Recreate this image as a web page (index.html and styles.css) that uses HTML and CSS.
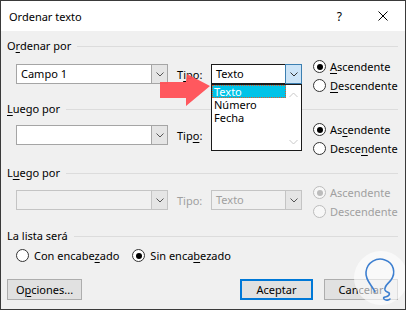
FILE: index.html
```html
<!DOCTYPE html>
<html>
<head>
<meta charset="utf-8">
<link rel="stylesheet" href="styles.css">
</head>
<body>
<div class="dlg">
  <div class="titlebar">
    <span class="title">Ordenar texto</span>
    <span class="help">?</span>
    <svg class="close" width="10" height="10" viewBox="0 0 10 10"><path d="M0.5 0.5L9.5 9.5M9.5 0.5L0.5 9.5" stroke="#000" stroke-width="1" fill="none"/></svg>
  </div>

  <section class="grp g1">
    <div class="hdr"><span>O<u>r</u>denar por</span><i class="line"></i></div>
    <div class="row">
      <div class="combo main"><span class="val">Campo 1</span><span class="btn"><svg width="8" height="5" viewBox="0 0 8 5"><path d="M0.5 0.5L4 4L7.5 0.5" stroke="#555" fill="none"/></svg></span></div>
      <span class="tipo">T<u>i</u>po:</span>
      <div class="combo small focus"><span class="val">Texto</span><span class="btn"><svg width="8" height="5" viewBox="0 0 8 5"><path d="M0.5 0.5L4 4L7.5 0.5" stroke="#333" fill="none"/></svg></span>
        <div class="list">
          <div class="items">
            <div class="item sel">Texto</div>
            <div class="item">Número</div>
            <div class="item">Fecha</div>
          </div>
          <div class="sbar">
            <svg width="9" height="6" viewBox="0 0 9 6"><path d="M0.5 5L4.5 1L8.5 5" stroke="#c8c8c8" fill="none"/></svg>
            <svg width="9" height="6" viewBox="0 0 9 6"><path d="M0.5 1L4.5 5L8.5 1" stroke="#c8c8c8" fill="none"/></svg>
          </div>
        </div>
      </div>
      <div class="radios">
        <label class="radio"><i class="dot on"></i><span><u>A</u>scendente</span></label>
        <label class="radio"><i class="dot"></i><span><u>D</u>escendente</span></label>
      </div>
    </div>
  </section>

  <section class="grp g2">
    <div class="hdr"><span><u>L</u>uego por</span><i class="line"></i></div>
    <div class="row">
      <div class="combo main"><span class="val"></span><span class="btn"><svg width="8" height="5" viewBox="0 0 8 5"><path d="M0.5 0.5L4 4L7.5 0.5" stroke="#555" fill="none"/></svg></span></div>
      <span class="tipo">Tip<u>o</u>:</span>
      <div class="combo small"><span class="val"></span><span class="btn"></span></div>
      <div class="radios">
        <label class="radio"><i class="dot on"></i><span>As<u>c</u>endente</span></label>
        <label class="radio"><i class="dot"></i><span>Desce<u>n</u>dente</span></label>
      </div>
    </div>
  </section>

  <section class="grp g3">
    <div class="hdr"><span>L<u>u</u>ego por</span><i class="line"></i></div>
    <div class="row">
      <div class="combo main dis"><span class="val"></span><span class="btn"><svg width="8" height="5" viewBox="0 0 8 5"><path d="M0.5 0.5L4 4L7.5 0.5" stroke="#555" fill="none"/></svg></span></div>
      <span class="tipo dtext">Tipo:</span>
      <div class="combo small dis"><span class="val dtext">Texto</span><span class="btn"><svg width="8" height="5" viewBox="0 0 8 5"><path d="M0.5 0.5L4 4L7.5 0.5" stroke="#555" fill="none"/></svg></span></div>
      <div class="radios">
        <label class="radio dtext"><i class="dot on dis"></i><span>Ascendente</span></label>
        <label class="radio dtext"><i class="dot dis"></i><span>Descendente</span></label>
      </div>
    </div>
  </section>

  <section class="grp g4">
    <div class="hdr"><span>La lista será</span><i class="line"></i></div>
    <div class="hrow">
      <label class="radio"><i class="dot"></i><span>Con encabe<u>z</u>ado</span></label>
      <label class="radio"><i class="dot on"></i><span>Sin enca<u>b</u>ezado</span></label>
    </div>
  </section>

  <div class="buttons">
    <button class="b opt">O<u>p</u>ciones...</button>
    <button class="b ok">Aceptar</button>
    <button class="b cancel">Cancelar</button>
  </div>

  <svg class="arrow" width="56" height="36" viewBox="0 0 56 36"><polygon points="0,8 26,8 27,0 50,12 26,32 26,24 0,24" fill="#ff4f55" fill-opacity="0.95"/></svg>

  <svg class="mark" width="60" height="60" viewBox="0 0 60 60">
    <circle cx="30" cy="30" r="27" fill="#ffffff" fill-opacity="0.6"/>
    <path d="M24 44 C 22 38, 14 33, 15 24 C 16 14, 26 9, 34 12 C 43 15, 45 25, 40 32 C 37 36, 33 38, 34 42 C 35 45, 40 44, 38 47 C 36 50, 31 48, 33 51 C 35 53, 38 52, 39 51" stroke="#3d7fd0" stroke-width="1.6" fill="none" stroke-linecap="round"/>
  </svg>
</div>
</body>
</html>
```
FILE: styles.css
```css
html, body { margin: 0; padding: 0; background: #fff; }
.dlg {
  width: 406px; height: 310px; box-sizing: border-box;
  border: 1px solid #3a3a3a; background: #f0f0f0;
  position: relative; overflow: hidden;
  font-family: "Noto Sans", sans-serif; font-size: 11px; color: #000;
}
u { text-decoration: underline; text-underline-offset: 2px; }
.titlebar {
  height: 30px; background: #fff; display: flex; align-items: center;
  padding-left: 8px; padding-right: 17px;
}
.title { font-size: 11px; }
.help { margin-left: auto; margin-right: 36px; font-size: 12px; }
.close { display: block; }

.grp { display: flex; flex-direction: column; }
.hdr { display: flex; align-items: center; height: 15px; line-height: 15px; padding-left: 6px; padding-right: 7px; }
.hdr .line { flex: 1; height: 0; border-top: 1px solid #dcdcdc; margin-left: 6px; margin-top: 1px; }
.g1 .hdr { margin-top: 7px; }
.g2 .hdr { margin-top: 6px; }
.g3 .hdr { margin-top: 7px; }
.g4 .hdr { margin-top: 7px; }

.row { display: flex; align-items: flex-start; padding-left: 15px; margin-top: 4px; }
.g3 .row { margin-top: 3px; }
.combo {
  box-sizing: border-box; height: 20px; background: #fff;
  border: 1px solid #a5a5a5; display: flex; position: relative;
}
.g1 .combo { margin-top: 7px; }
.g2 .combo { margin-top: 5px; }
.g3 .combo { margin-top: 7px; }
.combo.main { width: 152px; }
.combo.small { width: 91px; margin-left: 0; }
.combo .val { flex: 1; line-height: 18px; padding-left: 4px; }
.combo .btn {
  width: 16px; box-sizing: border-box; background: #e5e5e5; border-left: 1px solid #a5a5a5;
  display: flex; align-items: center; justify-content: center;
}
.g2 .combo.small .btn { background: #fff; border-left: none; }
.combo.focus { border-color: #1a1a1a; }
.combo.focus .btn { background: #cce4f7; border: 1px solid #3c7fb1; margin: -1px -1px -1px 0; width: 17px; height: 20px; }
.combo.dis { background: #f0f0f0; border-color: #c4c4c4; }
.combo.dis .btn { background: #e5e5e5; border-left: 1px solid #c4c4c4; }
.tipo { width: 34px; margin-left: 9px; line-height: 15px; margin-top: 10px; }
.g2 .tipo { margin-top: 8px; }
.g3 .tipo { margin-top: 10px; }
.dtext { color: #a0a0a0; }

.list {
  position: absolute; left: -1px; top: 19px; width: 91px; height: 67px;
  box-sizing: border-box; border: 1px solid #1a1a1a; background: #fff;
  display: flex; z-index: 5;
}
.items { flex: 1; padding-top: 0; }
.item { height: 13px; line-height: 13px; padding-left: 2px; }
.item.sel { background: #00c3e8; color: #fff; outline: 1px dotted #e05a2a; outline-offset: -1px; }
.sbar { width: 15px; display: flex; flex-direction: column; justify-content: space-between; align-items: center; padding: 7px 0 5px; }
.sbar svg { display: block; }

.radios { display: flex; flex-direction: column; margin-left: 11px; }
.radio { display: flex; align-items: center; height: 19px; }
.dot {
  width: 13px; height: 13px; box-sizing: border-box; border-radius: 50%;
  border: 1px solid #333; background: #fff; margin-right: 4px; position: relative;
}
.dot.on::after {
  content: ""; position: absolute; left: 2.5px; top: 2.5px; width: 6px; height: 6px;
  border-radius: 50%; background: #000;
}
.dot.dis { border-color: #bcbcbc; background: #f7f7f7; }
.dot.on.dis::after { background: #bcbcbc; }

.hrow { display: flex; padding-left: 15px; margin-top: 3px; gap: 13px; }
.hrow .dot { margin-right: 5px; }

.buttons { display: flex; padding-left: 6px; padding-right: 7px; margin-top: 14px; gap: 11px; }
.b {
  height: 21px; box-sizing: border-box; background: #e1e1e1; border: 1px solid #adadad;
  font-family: "Noto Sans", sans-serif; font-size: 11px; color: #000; padding: 0; line-height: 17px;
}
.opt { width: 75px; }
.ok { width: 73px; margin-left: auto; border: 2px solid #0078d7; }
.cancel { width: 74px; }

.arrow { position: absolute; left: 159px; top: 73px; }
.mark { position: absolute; left: 350px; top: 247px; }
```
